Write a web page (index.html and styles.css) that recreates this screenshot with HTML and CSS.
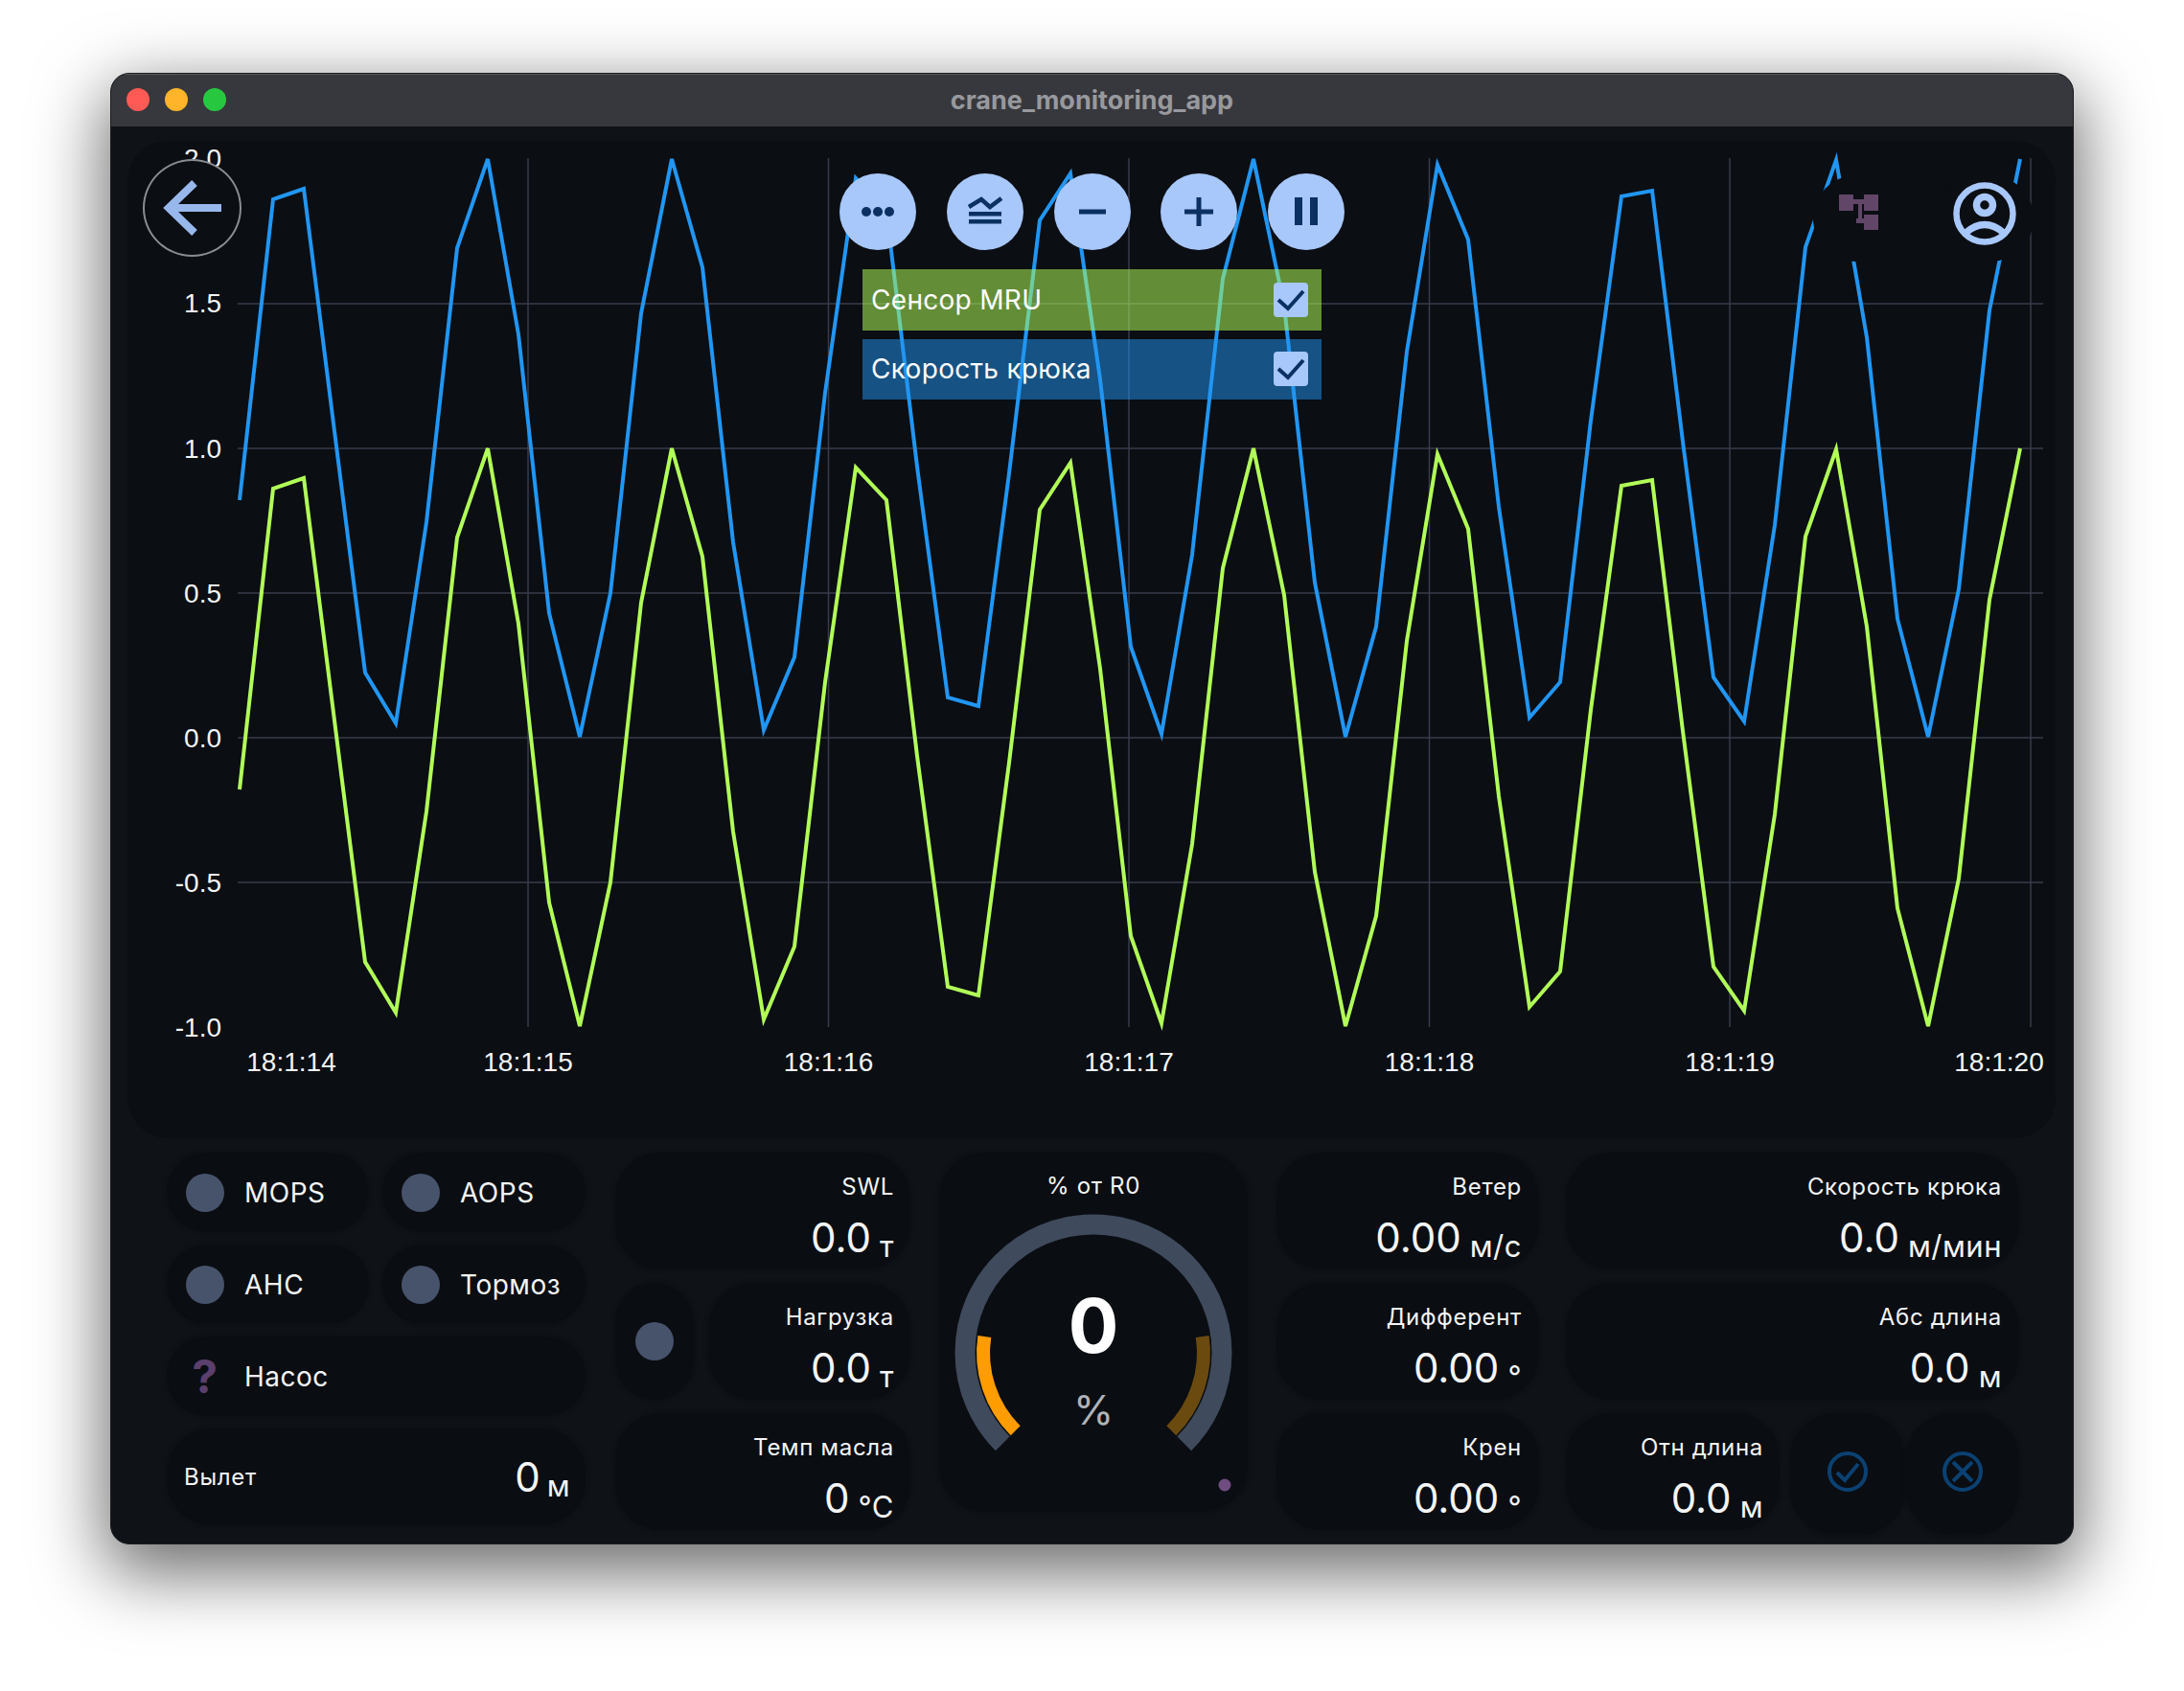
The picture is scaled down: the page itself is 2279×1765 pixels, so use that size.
FILE: index.html
```html
<!DOCTYPE html>
<html lang="ru">
<head>
    <meta charset="UTF-8">
    <meta name="viewport" content="width=device-width, initial-scale=1.0">
    <title>crane_monitoring_app</title>
    <link rel="stylesheet" href="styles.css">
</head>
<body>

    <div class="window">
        <div class="titlebar">
            <div class="lights">
                <span class="light red"></span>
                <span class="light yellow"></span>
                <span class="light green"></span>
            </div>
            <div class="title">crane_monitoring_app</div>
        </div>

        <div class="content">
            <div class="chart">
                <!-- viewBox keeps the window's own coordinates, easier to compare -->
                <svg class="plot" viewBox="133 147 2012 1041">
                    <defs>
                        <polyline id="series" fill="none" stroke-width="4" stroke-linejoin="miter" points="250,824 285,510 317,499 349,752 381,1004 413,1057 445,847 477,561 509,468 541,651 573,942 605,1071 637,921 669,629 701,468 733,581 765,868 797,1064 829,988 861,712 893,488 925,522 957,789 989,1030 1021,1039 1053,796 1085,532 1117,483 1148,698 1180,977 1212,1068 1244,881 1276,593 1308,468 1340,621 1372,910 1404,1071 1436,956 1468,669 1500,474 1532,552 1564,831 1596,1051 1628,1014 1660,741 1692,507 1724,501 1756,763 1788,1009 1820,1055 1852,850 1884,560 1916,469 1948,654 1980,948 2012,1071 2044,917 2076,626 2108,468"/>
                    </defs>
                    <g class="grid">
                        <line x1="248" y1="317" x2="2132" y2="317"/>
                        <line x1="248" y1="468" x2="2132" y2="468"/>
                        <line x1="248" y1="619" x2="2132" y2="619"/>
                        <line x1="248" y1="770" x2="2132" y2="770"/>
                        <line x1="248" y1="921" x2="2132" y2="921"/>
                        <line x1="551" y1="165" x2="551" y2="1072"/>
                        <line x1="864.5" y1="165" x2="864.5" y2="1072"/>
                        <line x1="1178" y1="165" x2="1178" y2="1072"/>
                        <line x1="1491.5" y1="165" x2="1491.5" y2="1072"/>
                        <line x1="1805" y1="165" x2="1805" y2="1072"/>
                        <line x1="2119" y1="165" x2="2119" y2="1072"/>
                    </g>
                    <g class="axis-y">
                        <text x="231" y="175">2.0</text>
                        <text x="231" y="326">1.5</text>
                        <text x="231" y="478">1.0</text>
                        <text x="231" y="629">0.5</text>
                        <text x="231" y="780">0.0</text>
                        <text x="231" y="931">-0.5</text>
                        <text x="231" y="1082">-1.0</text>
                    </g>
                    <g class="axis-x">
                        <text x="304" y="1118">18:1:14</text>
                        <text x="551" y="1118">18:1:15</text>
                        <text x="864.5" y="1118">18:1:16</text>
                        <text x="1178" y="1118">18:1:17</text>
                        <text x="1491.5" y="1118">18:1:18</text>
                        <text x="1805" y="1118">18:1:19</text>
                        <text x="2086" y="1118">18:1:20</text>
                    </g>
                    <use href="#series" stroke="#b2ff59"/>
                    <use href="#series" stroke="#2196f3" transform="translate(0 -302)"/>
                </svg>

                <button class="back-button">
                    <svg width="70" height="64" viewBox="0 0 70 64"><path d="M37 6 L10 32 L37 58 M10 32 H65" fill="none" stroke="#98b8ec" stroke-width="8"/></svg>
                </button>

                <div class="controls">
                    <button class="round-button">
                        <svg width="44" height="44" viewBox="0 0 44 44"><circle cx="10" cy="22" r="5"/><circle cx="22" cy="22" r="5"/><circle cx="34" cy="22" r="5"/></svg>
                    </button>
                    <button class="round-button">
                        <svg width="44" height="44" viewBox="0 0 44 44"><path d="M5 17 L18 9 L27 17 L39 8" fill="none" stroke="#0a3161" stroke-width="4.5"/><rect x="5" y="22" width="34" height="4.5"/><rect x="5" y="30" width="34" height="4.5"/></svg>
                    </button>
                    <button class="round-button">
                        <svg width="44" height="44" viewBox="0 0 44 44"><rect x="8" y="19.5" width="28" height="5"/></svg>
                    </button>
                    <button class="round-button">
                        <svg width="44" height="44" viewBox="0 0 44 44"><rect x="7" y="19.5" width="30" height="5"/><rect x="19.5" y="7" width="5" height="30"/></svg>
                    </button>
                    <button class="round-button">
                        <svg width="44" height="44" viewBox="0 0 44 44"><rect x="10" y="7" width="8" height="29"/><rect x="26" y="7" width="8" height="29"/></svg>
                    </button>
                </div>

                <div class="legend">
                    <div class="legend-row legend-green">
                        <span>Сенсор MRU</span>
                        <span class="checkbox"><svg width="36" height="36" viewBox="0 0 36 36"><path d="M5 18 L15 27 L31 9" fill="none" stroke="#0a3161" stroke-width="4"/></svg></span>
                    </div>
                    <div class="legend-row legend-blue">
                        <span>Скорость крюка</span>
                        <span class="checkbox"><svg width="36" height="36" viewBox="0 0 36 36"><path d="M5 18 L15 27 L31 9" fill="none" stroke="#0a3161" stroke-width="4"/></svg></span>
                    </div>
                </div>

                <div class="chart-action action-tree">
                    <svg width="44" height="40" viewBox="0 0 44 40" fill="#614668"><rect x="0" y="0" width="15" height="17"/><rect x="26" y="0" width="15" height="17"/><rect x="26" y="21" width="15" height="16"/><rect x="15" y="5" width="11" height="5"/><rect x="20" y="8" width="4" height="22"/><rect x="18" y="25" width="8" height="5"/></svg>
                </div>
                <div class="chart-action action-user">
                    <svg width="66" height="66" viewBox="0 0 66 66" fill="none" stroke="#a8c7fa"><circle cx="33" cy="33" r="29.5" stroke-width="6.5"/><circle cx="33" cy="24" r="8.5" stroke-width="7.5"/><path d="M13 53 Q33 36 53 53" stroke-width="7"/></svg>
                </div>
            </div>

            <div class="panel">
                <div class="col-status">
                    <div class="status-row">
                        <div class="tile status"><span class="dot"></span>MOPS</div>
                        <div class="tile status"><span class="dot"></span>AOPS</div>
                    </div>
                    <div class="status-row">
                        <div class="tile status"><span class="dot"></span>АНС</div>
                        <div class="tile status"><span class="dot"></span>Тормоз</div>
                    </div>
                    <div class="tile status"><span class="question">?</span>Насос</div>
                    <div class="tile outreach">
                        <span class="label">Вылет</span>
                        <span class="value">0<span class="unit">м</span></span>
                    </div>
                </div>

                <div class="col-values col-load">
                    <div class="tile reading">
                        <span class="label">SWL</span>
                        <span class="value">0.0<span class="unit">т</span></span>
                    </div>
                    <div class="tile-row">
                        <div class="tile dot-tile"><span class="dot"></span></div>
                        <div class="tile reading grow">
                            <span class="label">Нагрузка</span>
                            <span class="value">0.0<span class="unit">т</span></span>
                        </div>
                    </div>
                    <div class="tile reading">
                        <span class="label">Темп масла</span>
                        <span class="value">0<span class="unit">°C</span></span>
                    </div>
                </div>

                <div class="tile gauge">
                    <svg class="gauge-svg" viewBox="981 1204 320 373">
                        <text class="gauge-title" x="1141" y="1246">% от R0</text>
                        <path d="M1046.3 1506.7 A134 134 0 1 1 1235.7 1506.7" fill="none" stroke="#3f4a5c" stroke-width="21"/>
                        <path d="M1059.7 1493.3 A115 115 0 0 1 1027.3 1395" fill="none" stroke="#ff9c00" stroke-width="14"/>
                        <path d="M1222.3 1493.3 A115 115 0 0 0 1254.7 1395" fill="none" stroke="#6b4a10" stroke-width="14"/>
                        <text class="gauge-value" x="1141" y="1412">0</text>
                        <text class="gauge-unit" x="1141" y="1487">%</text>
                        <circle cx="1278" cy="1550" r="6.5" fill="#6f4d80"/>
                    </svg>
                </div>

                <div class="col-values col-env">
                    <div class="tile reading">
                        <span class="label">Ветер</span>
                        <span class="value">0.00<span class="unit">м/с</span></span>
                    </div>
                    <div class="tile reading">
                        <span class="label">Дифферент</span>
                        <span class="value">0.00<span class="unit">°</span></span>
                    </div>
                    <div class="tile reading">
                        <span class="label">Крен</span>
                        <span class="value">0.00<span class="unit">°</span></span>
                    </div>
                </div>

                <div class="col-values col-hook">
                    <div class="tile reading">
                        <span class="label">Скорость крюка</span>
                        <span class="value">0.0<span class="unit">м/мин</span></span>
                    </div>
                    <div class="tile reading">
                        <span class="label">Абс длина</span>
                        <span class="value">0.0<span class="unit">м</span></span>
                    </div>
                    <div class="tile-row">
                        <div class="tile reading grow">
                            <span class="label">Отн длина</span>
                            <span class="value">0.0<span class="unit">м</span></span>
                        </div>
                        <div class="tile icon-tile icon-ok">
                            <svg width="44" height="44" viewBox="0 0 44 44" fill="none" stroke="#0b4172" stroke-width="4"><circle cx="22" cy="22" r="19"/><path d="M11 23 L19 31 L33 14"/></svg>
                        </div>
                        <div class="tile icon-tile icon-cancel">
                            <svg width="44" height="44" viewBox="0 0 44 44" fill="none" stroke="#0b4172" stroke-width="4"><circle cx="22" cy="22" r="19"/><path d="M12 12 L32 32 M32 12 L12 32"/></svg>
                        </div>
                    </div>
                </div>
            </div>
        </div>
    </div>

</body>
</html>
```
FILE: styles.css
```css
body {
    margin: 0;
    padding: 76px 0 0 115px;
    height: 1765px;
    box-sizing: border-box;
    background: #fff;
    overflow: hidden;
    font-family: Inter, "Noto Sans", sans-serif;
    color: #f4f5f6;
}
.window {
    width: 2049px;
    height: 1536px;
    box-sizing: border-box;
    border: 1px solid #1c1c1e;
    border-radius: 20px;
    overflow: hidden;
    background: #0f1318;
    box-shadow: 0 24px 72px 6px rgba(0, 0, 0, 0.58);
}
.titlebar {
    height: 56px;
    padding-bottom: 2px;
    box-sizing: border-box;
    display: flex;
    align-items: center;
    justify-content: center;
    position: relative;
    background: #37383d;
    border-top: 1.5px solid #5a5b60;
    border-bottom: 1.5px solid #101114;
}
.lights {
    position: absolute;
    left: 16px;
    top: 14px;
    display: flex;
    gap: 16px;
}
.light {
    width: 24px;
    height: 24px;
    border-radius: 50%;
}
.red { background: #ff5a55; }
.yellow { background: #ffb429; }
.green { background: #27c840; }
.title {
    font-size: 27px;
    font-weight: 700;
    color: #98999d;
}
.content {
    padding: 14px 18px 0 17px;
}

/* chart */
.chart {
    position: relative;
    height: 1041px;
    border-radius: 42px;
    background: #0b0e13;
}
.plot {
    display: block;
    width: 2012px;
    height: 1041px;
}
.grid line {
    stroke: #383d4b;
    stroke-width: 1.5;
}
.axis-y text, .axis-x text {
    font-family: "Liberation Sans", Arial, sans-serif;
    font-size: 28px;
    fill: #f4f5f6;
}
.axis-y text { text-anchor: end; }
.axis-x text { text-anchor: middle; }
.back-button {
    position: absolute;
    left: 16px;
    top: 19px;
    width: 103px;
    height: 102px;
    padding: 0;
    display: flex;
    align-items: center;
    justify-content: center;
    border: 2px solid #8a8c90;
    border-radius: 50%;
    background: #0b0e13;
}
.controls {
    position: absolute;
    left: 743px;
    top: 34px;
    display: flex;
    gap: 31.75px;
}
.round-button {
    width: 80px;
    height: 80px;
    padding: 0;
    display: flex;
    align-items: center;
    justify-content: center;
    border: none;
    border-radius: 50%;
    background: #a8c7fa;
    fill: #0a3161;
}
.legend {
    position: absolute;
    left: 767px;
    top: 134px;
    width: 479px;
    display: flex;
    flex-direction: column;
    gap: 9px;
}
.legend-row {
    height: 63.5px;
    padding: 0 14px 0 9px;
    display: flex;
    align-items: center;
    justify-content: space-between;
    font-size: 28px;
    letter-spacing: 0.3px;
    color: #fff;
}
.legend-green { background: rgba(178, 255, 89, 0.53); }
.legend-blue { background: rgba(33, 150, 243, 0.5); }
.checkbox {
    width: 36px;
    height: 36px;
    border-radius: 4px;
    background: #a8c7fa;
}
.checkbox svg { display: block; }
.chart-action {
    position: absolute;
    top: 36px;
    height: 90px;
    padding-bottom: 10px;
    box-sizing: border-box;
    display: flex;
    align-items: center;
    justify-content: center;
    border-radius: 45px;
    background: #0b0e13;
}
.action-tree {
    left: 1759px;
    width: 98px;
}
.action-user {
    left: 1887px;
    width: 102px;
}

/* bottom panel */
.panel {
    display: flex;
    margin: 16px 0 0 42px;
}
.tile {
    border-radius: 46px;
    background: #0a0d12;
    box-shadow: 0 0 4px 1px #0a0d12;
}
.col-status {
    width: 435px;
    margin-right: 33px;
    display: grid;
    grid-template-rows: 81px 81px 81px 99px;
    row-gap: 15px;
}
.status-row {
    display: grid;
    grid-template-columns: 209px 210px;
    column-gap: 16px;
}
.status {
    display: flex;
    align-items: center;
    padding-left: 19px;
    font-size: 28px;
    letter-spacing: 0.5px;
}
.dot {
    flex: none;
    width: 40px;
    height: 40px;
    margin-right: 21px;
    border-radius: 50%;
    background: #47536b;
}
.question {
    flex: none;
    width: 40px;
    margin-right: 21px;
    text-align: center;
    font-size: 48px;
    font-weight: 700;
    color: #5b3f6c;
    line-height: 1;
}
.outreach {
    display: flex;
    align-items: center;
    justify-content: space-between;
    padding: 0 15px 0 17px;
}
.outreach .unit {
    margin-left: 7px;
}
.col-values {
    display: grid;
    grid-template-rows: 120px 120px 120px;
    row-gap: 16px;
}
.col-load {
    width: 306px;
    margin-right: 32px;
}
.col-env {
    width: 272px;
    margin-right: 30px;
}
.col-hook { width: 471px; }
.tile-row {
    display: flex;
    gap: 17px;
}
.tile-row .dot-tile {
    width: 80px;
    flex: none;
    display: flex;
    align-items: center;
    justify-content: center;
}
.dot-tile .dot { margin: 0; }
.grow {
    flex: 1;
}
.reading {
    display: flex;
    flex-direction: column;
    align-items: flex-end;
    padding: 21px 16px 0 0;
    box-sizing: border-box;
}
.col-hook .reading, .col-env .reading {
    padding-right: 17px;
}
.label {
    font-size: 24px;
    line-height: 28px;
    letter-spacing: 0.7px;
}
.value {
    font-size: 42px;
    line-height: 50px;
    white-space: nowrap;
}
.reading .value {
    margin-top: 14px;
}
.unit {
    margin-left: 9px;
    font-size: 31px;
    letter-spacing: 0.5px;
    vertical-align: -5px;
    line-height: 1;
}
.gauge {
    width: 320px;
    height: 373px;
    margin-right: 32px;
}
.gauge-svg {
    display: block;
    width: 320px;
    height: 373px;
}
.gauge-svg text {
    text-anchor: middle;
}
.gauge-title {
    font-size: 24px;
    letter-spacing: 0.7px;
    fill: #f4f5f6;
}
.gauge-value {
    font-size: 78px;
    font-weight: 700;
    fill: #fff;
}
.gauge-unit {
    font-size: 43px;
    fill: #b0b3b8;
}
.tile-row .icon-tile {
    flex: none;
    height: 125px;
    display: flex;
    align-items: flex-start;
    justify-content: center;
    padding-top: 38px;
    box-sizing: border-box;
}
.col-hook .grow {
    padding-right: 16px;
}
.icon-ok {
    width: 118px;
    margin-left: -4px;
}
.icon-cancel {
    width: 116px;
    margin-left: -14px;
}
```
